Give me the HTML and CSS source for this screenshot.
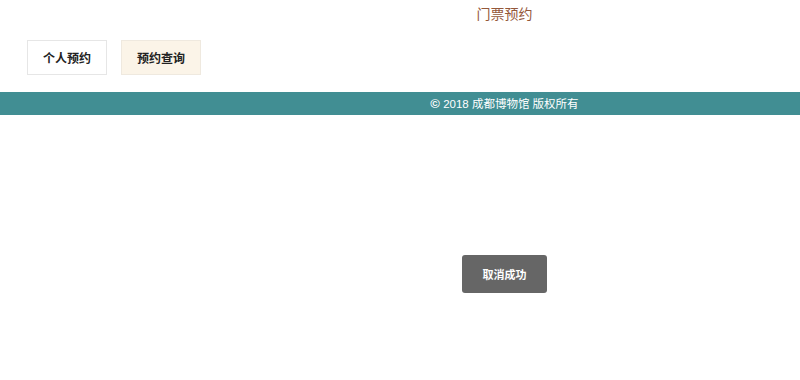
FILE: index.html
```html
<!DOCTYPE html>
<html lang="zh">
<head>
<meta charset="utf-8">
<title>门票预约</title>
<link rel="stylesheet" href="styles.css">
</head>
<body>
<header class="top">
  <h1 class="title">门票预约</h1>
</header>
<nav class="tabs">
  <a class="tab">个人预约</a>
  <a class="tab tab-active">预约查询</a>
</nav>
<footer class="footer">
  <span class="copy"><span class="copy-mark">©</span> 2018 成都博物馆 版权所有</span>
</footer>
<main class="stage">
  <div class="toast">取消成功</div>
</main>
</body>
</html>
```
FILE: styles.css
```css
* { box-sizing: border-box; }
html, body { margin: 0; padding: 0; background: #fff; }
body {
  font-family: "Liberation Sans", "Noto Sans CJK SC", sans-serif;
  width: 800px;
  height: 380px;
  overflow: hidden;
}
.top {
  height: 30px;
  padding-left: 209px;
  text-align: center;
}
.title {
  margin: 0;
  padding-top: 5px;
  font-size: 14px;
  line-height: 18px;
  font-weight: normal;
  color: #94583a;
}
.tabs {
  display: flex;
  gap: 14px;
  padding: 10px 0 0 27px;
  height: 62px;
}
.tab {
  width: 80px;
  height: 35px;
  border: 1px solid #e6e6e6;
  display: flex;
  align-items: center;
  justify-content: center;
  font-size: 12px;
  font-weight: bold;
  color: #222;
  background: #fff;
}
.tab-active {
  background: #fbf4e8;
  border-color: #efe9df;
}
.footer {
  height: 23px;
  background: #418e93;
  padding-left: 209px;
  text-align: center;
  color: #fff;
  font-size: 11.5px;
  line-height: 23px;
}
.copy-mark {
  font-size: 13px;
  font-weight: bold;
}
.stage {
  padding: 140px 0 0 462px;
}
.toast {
  width: 85px;
  height: 38px;
  background: #666;
  border-radius: 3px;
  color: #fff;
  font-size: 11px;
  font-weight: bold;
  display: flex;
  align-items: center;
  justify-content: center;
}
```
